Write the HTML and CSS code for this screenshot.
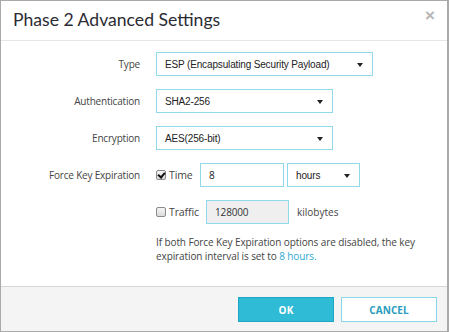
FILE: index.html
```html
<!DOCTYPE html>
<html lang="en">
<head>
  <meta charset="UTF-8">
  <title>Phase 2 Advanced Settings</title>
  <link rel="stylesheet" href="styles.css">
</head>
<body>
  <div class="modal">
    <div class="modal-header">
      <h1>Phase 2 Advanced Settings</h1>
      <span class="close">&times;</span>
    </div>

    <div class="modal-body">
      <div class="row">
        <label>Type</label>
        <div class="select wide">ESP (Encapsulating Security Payload)</div>
      </div>
      <div class="row">
        <label>Authentication</label>
        <div class="select mid">SHA2-256</div>
      </div>
      <div class="row">
        <label>Encryption</label>
        <div class="select mid">AES(256-bit)</div>
      </div>
      <div class="row">
        <label>Force Key Expiration</label>
        <div class="controls">
          <span class="check checked"></span>
          <span class="check-label time-label">Time</span>
          <div class="input time-input">8</div>
          <div class="select unit">hours</div>
        </div>
      </div>
      <div class="row">
        <label></label>
        <div class="controls">
          <span class="check"></span>
          <span class="check-label traffic-label">Traffic</span>
          <div class="input traffic-input disabled">128000</div>
          <span class="suffix">kilobytes</span>
        </div>
      </div>
      <div class="row note-row">
        <label></label>
        <p class="note">If both Force Key Expiration options are disabled, the key expiration interval is set to <span class="hl">8&nbsp;hours.</span></p>
      </div>
    </div>

    <div class="modal-footer">
      <button class="btn btn-ok">OK</button>
      <button class="btn btn-cancel">CANCEL</button>
    </div>
  </div>
</body>
</html>
```

FILE: styles.css
```css
* {
  box-sizing: border-box;
}
html, body {
  margin: 0;
  padding: 0;
  background: #fff;
}
body {
  font-family: "Open Sans", "Liberation Sans", sans-serif;
  color: #444;
}
.modal {
  width: 449px;
  height: 332px;
  border: 1px solid #aaa;
  border-right-width: 2px;
  display: flex;
  flex-direction: column;
  background: #fff;
}
.modal-header {
  height: 40px;
  border-bottom: 1px solid #e6e6e6;
  display: flex;
  align-items: center;
  justify-content: space-between;
  padding: 0 12px 3px 12px;
}
.modal-header h1 {
  margin: 0;
  font-family: "Lato", sans-serif;
  font-weight: 400;
  font-size: 17.6px;
  color: #2b2b33;
}
.close {
  font-family: "Liberation Sans", sans-serif;
  font-size: 17px;
  font-weight: bold;
  color: #b5b5b5;
  margin-top: -6px;
}
.modal-body {
  flex: 1;
  padding-top: 11px;
}
.row {
  display: flex;
  align-items: center;
  margin-bottom: 13px;
}
.row label {
  width: 139px;
  text-align: right;
  font-size: 10px;
  letter-spacing: -0.2px;
  color: #444;
  margin-right: 16px;
  flex-shrink: 0;
}
.select,
.input {
  height: 24px;
  border: 1px solid #8fd9ea;
  font-family: "Liberation Sans", sans-serif;
  font-size: 10px;
  letter-spacing: -0.15px;
  color: #222;
  display: flex;
  align-items: center;
  padding-left: 8px;
  position: relative;
}
.select::after {
  content: "";
  position: absolute;
  right: 9px;
  top: 10px;
  border-left: 3px solid transparent;
  border-right: 3px solid transparent;
  border-top: 4px solid #222;
}
.wide {
  width: 217px;
}
.mid {
  width: 177px;
}
.controls {
  display: flex;
  align-items: center;
}
.check {
  width: 10px;
  height: 10px;
  border: 1px solid #8a8a8a;
  border-radius: 2px;
  background: linear-gradient(#f4f4f4, #dcdcdc);
  position: relative;
}
.check.checked::after {
  content: "";
  position: absolute;
  left: 2px;
  top: 0;
  width: 3px;
  height: 5px;
  border-right: 2px solid #111;
  border-bottom: 2px solid #111;
  transform: rotate(40deg);
}
.check-label {
  font-size: 10.5px;
  letter-spacing: -0.1px;
  color: #444;
  margin-left: 3px;
}
.time-label {
  width: 31px;
}
.traffic-label {
  width: 37px;
}
.time-input {
  width: 84px;
  font-family: "Open Sans", sans-serif;
}
.unit {
  width: 73px;
  margin-left: 3px;
}
.traffic-input {
  width: 83px;
  font-family: "Open Sans", sans-serif;
}
.disabled {
  background: #efefef;
  color: #333;
}
.suffix {
  font-size: 10px;
  color: #444;
  margin-left: 8px;
}
.note-row {
  margin-top: -2px;
}
.note {
  margin: 0;
  width: 262px;
  font-size: 10px;
  letter-spacing: -0.1px;
  line-height: 14px;
  color: #444;
}
.hl {
  color: #2ea8d4;
}
.modal-footer {
  height: 45px;
  border-top: 1px solid #d6d6d6;
  background: #f4f4f4;
  display: flex;
  justify-content: flex-end;
  align-items: flex-start;
  padding: 10px 10px 0 0;
  gap: 7px;
}
.btn {
  height: 25px;
  width: 96px;
  font-family: "Open Sans", sans-serif;
  font-size: 10px;
  font-weight: bold;
  letter-spacing: 0.1px;
  cursor: pointer;
}
.btn-ok {
  background: #2fbbd5;
  border: 1px solid #1ea7c4;
  color: #fff;
}
.btn-cancel {
  background: #fff;
  border: 1px solid #84d8ea;
  color: #2a9cbd;
}
```
